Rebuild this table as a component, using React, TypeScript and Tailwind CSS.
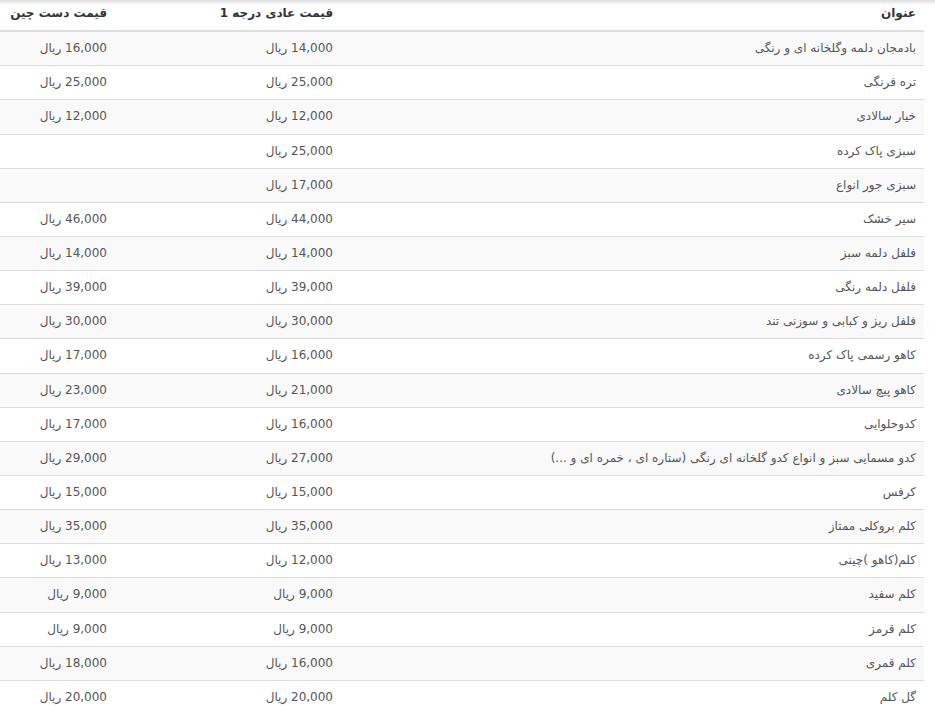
import React from "react";

type Row = { title: string; normal: string; picked: string };

const rows: Row[] = [
  { title: "بادمجان دلمه وگلخانه ای و رنگی", normal: "14,000", picked: "16,000" },
  { title: "تره فرنگی", normal: "25,000", picked: "25,000" },
  { title: "خیار سالادی", normal: "12,000", picked: "12,000" },
  { title: "سبزی پاک کرده", normal: "25,000", picked: "" },
  { title: "سبزی جور انواع", normal: "17,000", picked: "" },
  { title: "سیر خشک", normal: "44,000", picked: "46,000" },
  { title: "فلفل دلمه سبز", normal: "14,000", picked: "14,000" },
  { title: "فلفل دلمه رنگی", normal: "39,000", picked: "39,000" },
  { title: "فلفل ریز و کبابی و سوزنی تند", normal: "30,000", picked: "30,000" },
  { title: "کاهو رسمی پاک کرده", normal: "16,000", picked: "17,000" },
  { title: "کاهو پیچ سالادی", normal: "21,000", picked: "23,000" },
  { title: "کدوحلوایی", normal: "16,000", picked: "17,000" },
  {
    title: "کدو مسمایی سبز و انواع کدو گلخانه ای رنگی (ستاره ای ، خمره ای و ...)",
    normal: "27,000",
    picked: "29,000",
  },
  { title: "کرفس", normal: "15,000", picked: "15,000" },
  { title: "کلم بروکلی ممتاز", normal: "35,000", picked: "35,000" },
  { title: "کلم(کاهو )چینی", normal: "12,000", picked: "13,000" },
  { title: "کلم سفید", normal: "9,000", picked: "9,000" },
  { title: "کلم قرمز", normal: "9,000", picked: "9,000" },
  { title: "کلم قمری", normal: "16,000", picked: "18,000" },
  { title: "گل کلم", normal: "20,000", picked: "20,000" },
];

function price(v: string) {
  return v ? `${v} ریال` : "";
}

export default function App() {
  return (
    <div className="relative min-h-screen bg-white overflow-hidden">
      {/* top shadow of the sticky bar above */}
      <div className="absolute top-0 left-0 right-0 h-[5px] bg-gradient-to-b from-[#00000022] to-transparent" />
      <div className="w-[924px] -mt-[3px]">
        <table
          dir="rtl"
          className="w-full border-collapse text-[12px] leading-[1.42857] text-[#555] font-['DejaVu_Sans',sans-serif]"
        >
          <colgroup>
            <col className="w-[583px]" />
            <col className="w-[226px]" />
            <col className="w-[115px]" />
          </colgroup>
          <thead>
            <tr className="border-b-2 border-[#ddd]">
              <th className="px-2 py-2 text-right font-bold text-[#333]">عنوان</th>
              <th className="px-2 py-2 text-right font-bold text-[#333]">قیمت عادی درجه 1</th>
              <th className="px-2 py-2 text-right font-bold text-[#333]">قیمت دست چین</th>
            </tr>
          </thead>
          <tbody>
            {rows.map((r, i) => (
              <tr key={i} className={i % 2 === 0 ? "bg-[#f9f9f9]" : "bg-white"}>
                <td className="border-t border-[#ddd] px-2 py-2 text-right">{r.title}</td>
                <td className="border-t border-[#ddd] px-2 py-2 text-right">{price(r.normal)}</td>
                <td className="border-t border-[#ddd] px-2 py-2 text-right">{price(r.picked)}</td>
              </tr>
            ))}
          </tbody>
        </table>
      </div>
    </div>
  );
}
